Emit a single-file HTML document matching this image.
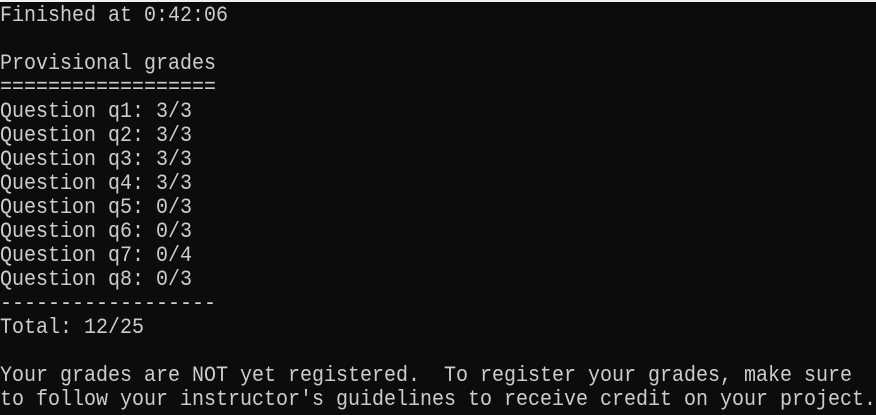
<!DOCTYPE html>
<html><head><meta charset="utf-8"><style>
html,body{margin:0;padding:0;}
body{width:876px;height:415px;background:#0c0c0c;border-top:2px solid #f0f0f0;box-sizing:border-box;overflow:hidden;}
pre{margin:0;padding:2px 0 0 0;font-family:"Liberation Mono",monospace;font-size:22px;line-height:24px;color:#cccccc;transform:scaleX(0.909);transform-origin:0 0;width:964px;}
</style></head><body><pre>Finished at 0:42:06

Provisional grades
==================
Question q1: 3/3
Question q2: 3/3
Question q3: 3/3
Question q4: 3/3
Question q5: 0/3
Question q6: 0/3
Question q7: 0/4
Question q8: 0/3
------------------
Total: 12/25

Your grades are NOT yet registered.  To register your grades, make sure
to follow your instructor's guidelines to receive credit on your project.</pre></body></html>
